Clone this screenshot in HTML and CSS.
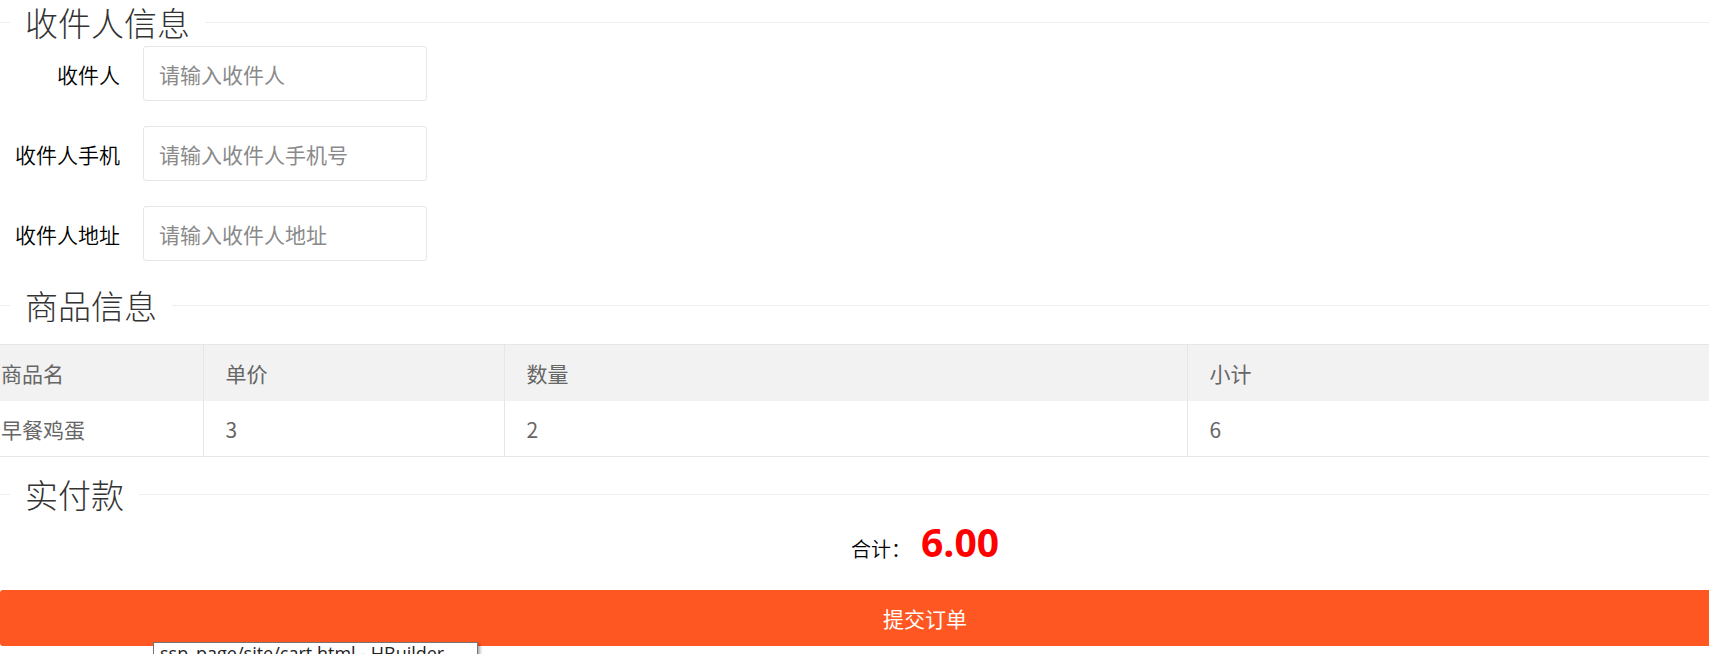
FILE: index.html
```html
<!DOCTYPE html>
<html lang="zh-CN">
<head>
    <meta charset="UTF-8">
    <meta name="viewport" content="width=device-width, initial-scale=1.0">
    <title>确认订单</title>
    <link rel="stylesheet" href="styles.css">
</head>
<body>
    <div class="page">
        <fieldset class="field-title">
            <legend>收件人信息</legend>
            <div class="form-item">
                <label class="form-label" for="name">收件人</label>
                <input class="input" type="text" id="name" placeholder="请输入收件人">
            </div>
            <div class="form-item">
                <label class="form-label" for="phone">收件人手机</label>
                <input class="input" type="text" id="phone" placeholder="请输入收件人手机号">
            </div>
            <div class="form-item">
                <label class="form-label" for="address">收件人地址</label>
                <input class="input" type="text" id="address" placeholder="请输入收件人地址">
            </div>
        </fieldset>

        <fieldset class="field-title field-goods">
            <legend>商品信息</legend>
        </fieldset>
        <table class="goods">
            <colgroup>
                <col class="col-name">
                <col class="col-price">
                <col class="col-num">
                <col>
            </colgroup>
            <thead>
                <tr>
                    <th>商品名</th>
                    <th>单价</th>
                    <th>数量</th>
                    <th>小计</th>
                </tr>
            </thead>
            <tbody>
                <tr>
                    <td>早餐鸡蛋</td>
                    <td>3</td>
                    <td>2</td>
                    <td>6</td>
                </tr>
            </tbody>
        </table>

        <fieldset class="field-title field-pay">
            <legend>实付款</legend>
            <div class="total">
                <span class="total-label">合计：</span>
                <span class="amount">6.00</span>
            </div>
        </fieldset>

        <button class="btn-submit" type="button">提交订单</button>
    </div>

    <div class="tooltip">ssp_page/site/cart.html - HBuilder</div>
</body>
</html>
```

FILE: styles.css
```css
html, body {
    margin: 0;
    padding: 0;
    overflow: hidden;
}
body {
    font-family: "Noto Sans CJK SC", sans-serif;
    color: #333;
    background: #fff;
}
.page {
    width: 1850px;
}
.field-title {
    margin: 0;
    padding: 0;
    min-width: 0;
    border: none;
    border-top: 1px solid #eee;
}
.field-title legend {
    margin-left: 10px;
    padding: 0 15px;
    font-size: 33px;
    line-height: 45px;
    font-weight: 300;
    color: #333;
}
.form-item {
    display: flex;
    align-items: center;
    margin-top: 1px;
    margin-bottom: 25px;
}
.form-item:last-child {
    margin-bottom: 0;
}
.form-label {
    width: 120px;
    text-align: right;
    font-size: 21px;
    font-weight: 350;
    color: #000;
}
.input {
    margin-left: 23px;
    width: 284px;
    height: 55px;
    box-sizing: border-box;
    padding: 0 15px;
    border: 1px solid #e6e6e6;
    border-radius: 3px;
    font-family: inherit;
    font-size: 21px;
    color: #333;
    outline: none;
}
.input::placeholder {
    color: #8a8a8a;
}
.field-goods {
    margin-top: 22px;
}
.goods {
    width: 100%;
    margin-top: 16px;
    border-collapse: collapse;
    table-layout: fixed;
    font-size: 21px;
    color: #666;
}
.goods .col-name {
    width: 203px;
}
.goods .col-price {
    width: 301px;
}
.goods .col-num {
    width: 683px;
}
.goods th,
.goods td {
    padding: 0 22px;
    border: 1px solid #e6e6e6;
    text-align: left;
    font-weight: normal;
}
.goods th {
    height: 56px;
    background: #f2f2f2;
    border-bottom: none;
}
.goods td {
    height: 55px;
    border-top: none;
}
.goods th:first-child,
.goods td:first-child {
    padding-left: 1px;
    border-left: none;
}
.field-pay {
    margin-top: 15px;
}
.total {
    display: flex;
    justify-content: center;
    align-items: baseline;
}
.total-label {
    font-size: 20px;
    font-weight: 350;
    color: #000;
}
.amount {
    margin-left: 10px;
    font-family: "Open Sans", sans-serif;
    font-weight: bold;
    font-size: 39px;
    line-height: 50px;
    color: #f00;
}
.btn-submit {
    display: block;
    width: 100%;
    height: 56px;
    margin-top: 23px;
    border: none;
    border-radius: 3px;
    background: #ff5722;
    color: #fff;
    font-family: inherit;
    font-size: 21px;
    cursor: pointer;
}
/* browser title tooltip caught in the screenshot */
.tooltip {
    position: absolute;
    left: 153px;
    top: 642px;
    width: 325px;
    height: 30px;
    box-sizing: border-box;
    padding: 0 6px;
    border: 1px solid #767676;
    background: #fff;
    box-shadow: 2px 2px 3px rgba(0, 0, 0, 0.35);
    font-family: "Open Sans", sans-serif;
    font-size: 18px;
    line-height: 20px;
    color: #222;
    white-space: nowrap;
    overflow: hidden;
}
```
